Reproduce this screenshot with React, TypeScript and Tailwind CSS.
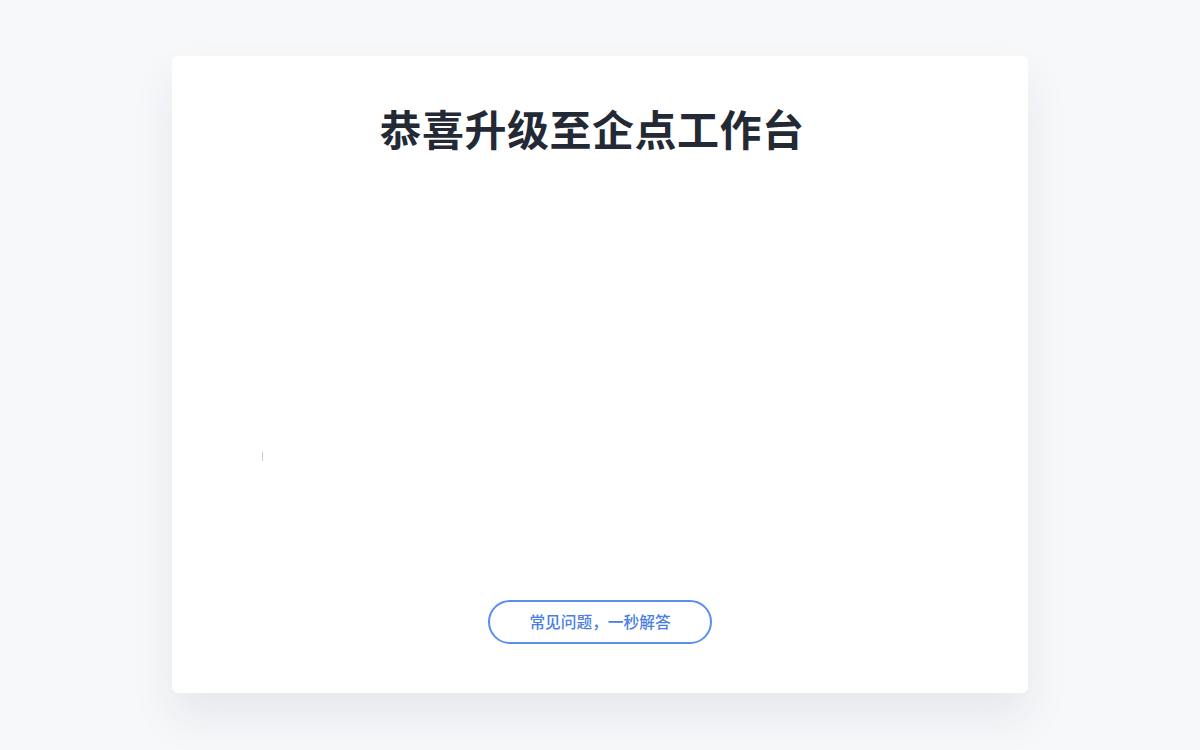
import React from "react";

export default function App() {
  return (
    <div
      className="w-full h-[750px] bg-[#f7f8fa] overflow-hidden pt-[56px]"
      style={{ fontFamily: '"Noto Sans CJK SC", "Noto Sans", sans-serif' }}
    >
      <div className="relative mx-auto w-[856px] h-[637px] bg-white rounded-[6px] shadow-[0_24px_44px_rgba(30,40,60,0.08)] flex flex-col items-center">
        <h1 className="mt-[44px] pr-[16px] text-[42px] leading-[56px] font-semibold text-[#232a36] tracking-[0.5px]">
          恭喜升级至企点工作台
        </h1>
        <div className="absolute left-[90px] top-[396px] w-px h-[9px] bg-[#c9ccd2]" />
        <div className="flex-1" />
        <button className="mb-[49px] w-[224px] h-[44px] rounded-full border-2 border-[#5b8def] text-[#4a7ee6] text-[15.7px] font-medium bg-white flex items-center justify-center">
          常见问题，一秒解答
        </button>
      </div>
    </div>
  );
}
